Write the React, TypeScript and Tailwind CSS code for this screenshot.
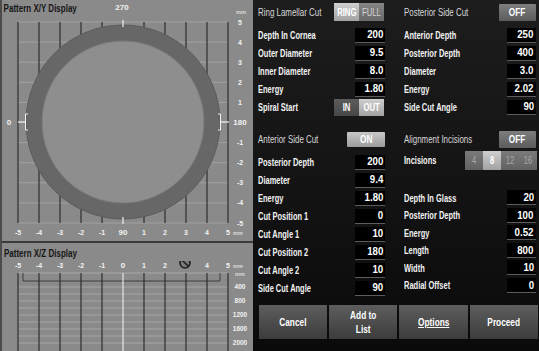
import React from "react";

const SANS = "font-['Liberation_Sans',Arial,sans-serif]";

const GRID_X = Array.from({ length: 11 }, (_, i) => 18 + i * 21);
const GRID_Y = Array.from({ length: 11 }, (_, i) => 22 + i * 20.1);
const XY_BOTTOM = ["-5", "-4", "-3", "-2", "-1", "90", "1", "2", "3", "4", "5"];
const XY_RIGHT = ["5", "4", "3", "2", "1", "180", "-1", "-2", "-3", "-4", "-5"];
const XZ_TOP = ["-5", "-4", "-3", "-2", "-1", "0", "1", "2", "", "4", "5"];
const XZ_LINES = [287, 294, 301, 308, 315, 322, 329, 336, 343];
const XZ_RIGHT: [string, number][] = [
  ["400", 289],
  ["800", 303],
  ["1200", 317],
  ["1600", 331],
  ["2000", 345],
];

function XYChart() {
  return (
    <svg width={251} height={225} viewBox="2 16 251 225" className="block">
      {GRID_Y.map((y) => (
        <line key={y} x1={18} x2={228} y1={y} y2={y} stroke="#a2a2a2" strokeWidth={1} />
      ))}
      {GRID_X.map((x, i) =>
        i === 5 ? null : (
          <line key={x} x1={x} x2={x} y1={22} y2={223} stroke="#2e2e2e" strokeWidth={1.2} />
        ),
      )}
      {/* lamellar ring */}
      <circle cx={123} cy={122} r={97} fill="#676767" stroke="#5c5c5c" strokeWidth={1} />
      <circle cx={123} cy={122} r={81} fill="#8e8e8e" stroke="#7a7a7a" strokeWidth={1} />
      {/* center ticks */}
      <line x1={123} x2={123} y1={20} y2={27} stroke="#f0f0f0" strokeWidth={1.2} />
      <line x1={123} x2={123} y1={217} y2={224} stroke="#f0f0f0" strokeWidth={1.2} />
      <line x1={18} x2={25} y1={122} y2={122} stroke="#f0f0f0" strokeWidth={1.2} />
      <path d="M28 114 H25.5 V130 H28" fill="none" stroke="#f0f0f0" strokeWidth={1} />
      <line x1={221} x2={229} y1={122} y2={122} stroke="#f0f0f0" strokeWidth={1.2} />
      <path d="M218 114 H220.5 V130 H218" fill="none" stroke="#f0f0f0" strokeWidth={1} />
      <g fill="#f2f2f2" fontFamily="'Liberation Sans',Arial,sans-serif" fontWeight="bold" textAnchor="middle">
        <text x={9} y={124.5} fontSize={8}>0</text>
        {XY_RIGHT.map((t, i) => (
          <text key={t} x={240} y={GRID_Y[i] + 2.5} fontSize={i === 5 ? 8 : 7}>
            {t}
          </text>
        ))}
        {XY_BOTTOM.map((t, i) => (
          <text key={t} x={GRID_X[i]} y={234.5} fontSize={i === 5 ? 8 : 7}>
            {t}
          </text>
        ))}
        <text x={238} y={234.5} fontSize={5.5} fill="#dcdcdc">mm</text>
      </g>
    </svg>
  );
}

function XZChart() {
  return (
    <svg width={251} height={90} viewBox="2 261 251 90" className="block">
      <line x1={18} x2={228} y1={273} y2={273} stroke="#a8a8a8" strokeWidth={1} />
      {XZ_LINES.map((y) => (
        <line key={y} x1={18} x2={228} y1={y} y2={y} stroke="#a6a6a6" strokeWidth={1} />
      ))}
      <path d="M23 273 V281 H220 V273" fill="none" stroke="#3c3c3c" strokeWidth={1} />
      {GRID_X.map((x, i) => (
        <line
          key={x}
          x1={x}
          x2={x}
          y1={273}
          y2={351}
          stroke={i === 5 ? "#e6e6e6" : "#2e2e2e"}
          strokeWidth={1.2}
        />
      ))}
      {/* probe marker */}
      <circle cx={185} cy={263} r={5} fill="#7a7a7a" stroke="#1e1e1e" strokeWidth={1.6} />
      <line x1={182} x2={188.5} y1={260} y2={266.5} stroke="#1e1e1e" strokeWidth={1.5} />
      <g fill="#f2f2f2" fontFamily="'Liberation Sans',Arial,sans-serif" fontWeight="bold" textAnchor="middle">
        {XZ_TOP.map((t, i) =>
          t ? (
            <text key={t} x={GRID_X[i]} y={268} fontSize={i === 5 ? 8 : 7}>
              {t}
            </text>
          ) : null,
        )}
        <text x={238} y={268} fontSize={5.5} fill="#dcdcdc">mm</text>
        <text x={240} y={276} fontSize={5.5} fill="#dcdcdc">mm</text>
        {XZ_RIGHT.map(([t, y]) => (
          <text key={t} x={240} y={y} fontSize={6.5}>
            {t}
          </text>
        ))}
      </g>
    </svg>
  );
}

function Label({ children, head }: { children: React.ReactNode; head?: boolean }) {
  return (
    <span
      className={
        head
          ? "min-w-0 flex-1 origin-left scale-x-[0.72] whitespace-nowrap text-[11px] text-[#d8d8d8]"
          : "min-w-0 flex-1 origin-left scale-x-[0.68] whitespace-nowrap text-[11px] font-bold text-[#f2f2f2]"
      }
    >
      {children}
    </span>
  );
}

function Field({ label, value, w = "w-[30px]" }: { label: string; value: string; w?: string }) {
  return (
    <div className="flex h-[18px] items-center justify-between">
      <Label>{label}</Label>
      <span
        className={`flex h-[15px] shrink-0 ${w} items-center justify-end border-b border-[#5c5c5c] bg-black pr-[2px] text-[11px] font-bold text-white`}
      >
        <span className="origin-right scale-x-[0.88]">{value}</span>
      </span>
    </div>
  );
}

function Pill({ text, on }: { text: string; on?: boolean }) {
  return (
    <span
      className={
        on
          ? "flex h-[15px] w-[38px] shrink-0 items-center justify-center rounded-[1px] bg-linear-to-b from-[#c8c8c8] to-[#9c9c9c] text-[11px] font-bold text-white"
          : "flex h-[17px] w-[37px] shrink-0 items-center justify-center rounded-[1px] bg-linear-to-b from-[#7e7e7e] to-[#5c5c5c] text-[11px] font-bold text-white"
      }
    >
      <span className="scale-x-[0.75]">{text}</span>
    </span>
  );
}

function Seg({ items, active, w, dim = "from-[#858585] to-[#6a6a6a] text-[#d4d4d4]" }: { items: string[]; active: number; w: string; dim?: string }) {
  return (
    <div className="flex h-full shrink-0">
      {items.map((t, i) => (
        <span
          key={t}
          className={
            i === active
              ? `flex ${w} h-full items-center justify-center bg-linear-to-b from-[#cfcfcf] to-[#a2a2a2] text-[11px] font-bold text-white`
              : `flex ${w} h-full items-center justify-center bg-linear-to-b text-[11px] ${dim}`
          }
        >
          <span className="scale-x-[0.7]">{t}</span>
        </span>
      ))}
    </div>
  );
}

function ActionButton({ children, underline }: { children: React.ReactNode; underline?: boolean }) {
  return (
    <button className="flex flex-1 items-center justify-center bg-linear-to-b from-[#5e5e5e] to-[#3c3c3c] text-center text-[11.5px] font-bold leading-[14px] text-white">
      <span className={`scale-x-[0.72] ${underline ? "underline" : ""}`}>{children}</span>
    </button>
  );
}

export default function App() {
  return (
    <div className={`flex h-[351px] w-[539px] overflow-hidden bg-black ${SANS}`}>
      {/* pattern displays */}
      <div className="flex w-[253px] flex-col border-l-2 border-[#4c4c4c] bg-[#3a3a3a]">
        <div className="h-[241px] bg-[#8a8a8a]">
          <div className="flex h-[16px] items-center">
            <span className="w-[105px] origin-left scale-x-[0.8] whitespace-nowrap pl-[2px] text-[10px] font-bold text-[#161616]">
              Pattern X/Y Display
            </span>
            <span className="w-[30px] text-center text-[8px] font-bold text-[#f2f2f2]">270</span>
            <span className="ml-auto w-[24px] self-end pb-[1px] text-center text-[5.5px] font-bold leading-[6px] text-[#dcdcdc]">
              mm
            </span>
          </div>
          <XYChart />
        </div>
        <div className="mt-[2px] h-[108px] bg-[#8a8a8a]">
          <div className="flex h-[18px] items-center pl-[2px] pt-[2px]">
            <span className="origin-left scale-x-[0.8] whitespace-nowrap text-[10px] font-bold text-[#161616]">
              Pattern X/Z Display
            </span>
          </div>
          <XZChart />
        </div>
      </div>

      {/* parameters */}
      <div className="flex flex-1 flex-col bg-linear-to-b from-[#1d1d1d] via-[#141414] to-[#0a0a0a]">
        <div className="flex h-[305px]">
          <div className="flex w-[133px] flex-col pl-[5px] pr-[1px]">
            <div className="flex h-[24px] items-center justify-between">
              <Label head>Ring Lamellar Cut</Label>
              <div className="mr-[1px] flex h-[18px]">
                <Seg items={["RING", "FULL"]} active={0} w="w-[25px]" />
              </div>
            </div>
            <div className="pt-[2px]">
              <Field label="Depth In Cornea" value="200" />
              <Field label="Outer Diameter" value="9.5" />
              <Field label="Inner Diameter" value="8.0" />
              <Field label="Energy" value="1.80" />
              <div className="flex h-[18px] items-center justify-between">
                <Label>Spiral Start</Label>
                <div className="mr-[1px] flex h-[17px]">
                  <Seg items={["IN", "OUT"]} active={1} w="w-[25px]" dim="from-[#5c5c5c] to-[#464646] font-bold text-white" />
                </div>
              </div>
            </div>

            <div className="mt-[14px] flex h-[18px] items-center justify-between">
              <Label head>Anterior Side Cut</Label>
              <Pill text="ON" on />
            </div>
            <div className="mt-[5px]">
              <Field label="Posterior Depth" value="200" />
              <Field label="Diameter" value="9.4" />
              <Field label="Energy" value="1.80" />
              <Field label="Cut Position 1" value="0" />
              <Field label="Cut Angle 1" value="10" />
              <Field label="Cut Position 2" value="180" />
              <Field label="Cut Angle 2" value="10" />
              <Field label="Side Cut Angle" value="90" />
            </div>
          </div>

          <div className="flex flex-1 flex-col pl-[18px] pr-[9px]">
            <div className="flex h-[24px] items-center justify-between">
              <Label head>Posterior Side Cut</Label>
              <Pill text="OFF" />
            </div>
            <div className="pt-[2px]">
              <Field label="Anterior Depth" value="250" w="w-[29px]" />
              <Field label="Posterior Depth" value="400" w="w-[29px]" />
              <Field label="Diameter" value="3.0" w="w-[29px]" />
              <Field label="Energy" value="2.02" w="w-[29px]" />
              <Field label="Side Cut Angle" value="90" w="w-[29px]" />
            </div>

            <div className="mt-[14px] flex h-[18px] items-center justify-between">
              <Label head>Alignment Incisions</Label>
              <Pill text="OFF" />
            </div>
            <div className="mt-[3px] flex h-[19px] items-center justify-between">
              <Label>Incisions</Label>
              <div className="-mr-[1px] flex h-[19px]">
                <Seg items={["4", "8", "12", "16"]} active={1} w="w-[18px]" dim="from-[#7a7a7a] to-[#626262] text-[#a8a8a8]" />
              </div>
            </div>
            <div className="mt-[19px] flex flex-col [&>div]:h-[17.5px]">
              <Field label="Depth In Glass" value="20" w="w-[29px]" />
              <Field label="Posterior Depth" value="100" w="w-[29px]" />
              <Field label="Energy" value="0.52" w="w-[29px]" />
              <Field label="Length" value="800" w="w-[29px]" />
              <Field label="Width" value="10" w="w-[29px]" />
              <Field label="Radial Offset" value="0" w="w-[29px]" />
            </div>
          </div>
        </div>

        <div className="flex h-[34px] gap-[2px] pl-[6px] pr-[7px]">
          <ActionButton>Cancel</ActionButton>
          <ActionButton>
            Add to
            <br />
            List
          </ActionButton>
          <ActionButton underline>Options</ActionButton>
          <ActionButton>Proceed</ActionButton>
        </div>
      </div>
    </div>
  );
}
